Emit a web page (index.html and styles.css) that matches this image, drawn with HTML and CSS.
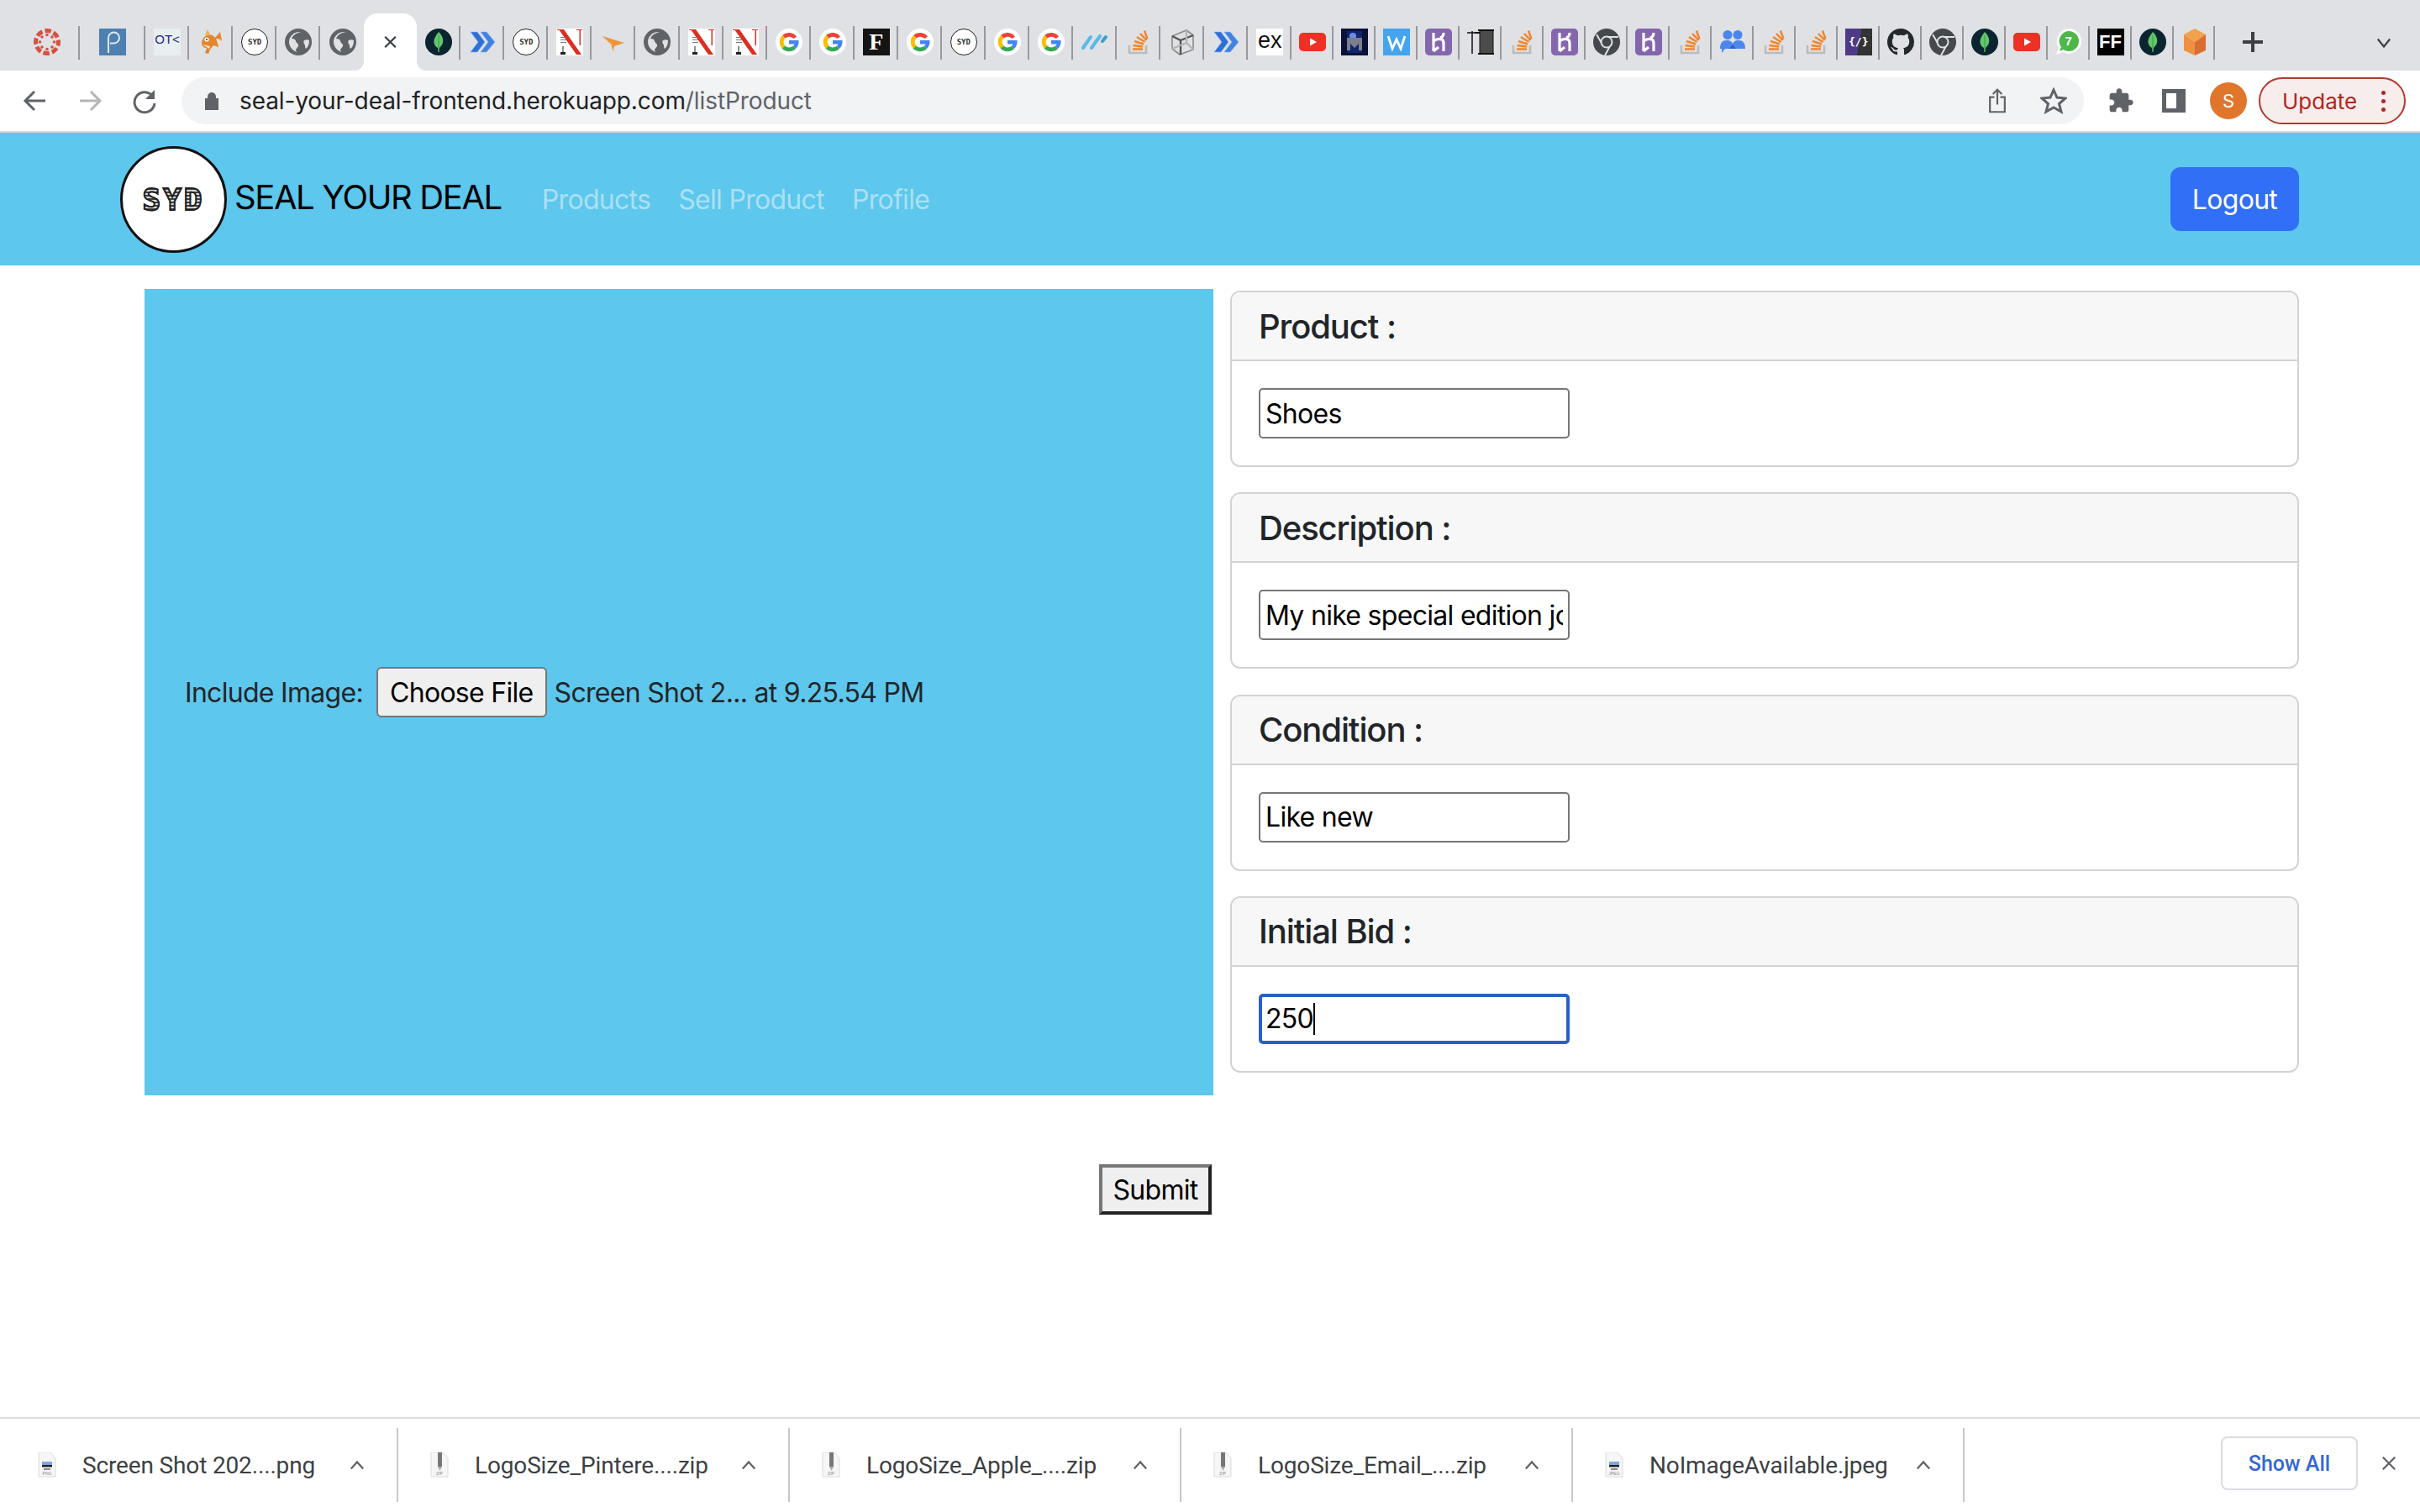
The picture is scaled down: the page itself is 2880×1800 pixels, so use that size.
FILE: index.html
```html
<!DOCTYPE html>
<html lang="en">

<head>
    <meta charset="UTF-8">
    <title>Seal Your Deal</title>
    <link rel="stylesheet" href="styles.css">
</head>

<body>

<!-- favicon sprites -->
<svg class="sprites" xmlns="http://www.w3.org/2000/svg">
    <symbol id="i-canvas" viewBox="0 0 32 32">
        <circle cx="16" cy="16" r="13.5" fill="none" stroke="#d8503f" stroke-width="5" stroke-dasharray="7.5 3.1" stroke-dashoffset="3"/>
        <circle cx="16" cy="7.5" r="1.8" fill="#d8503f"/><circle cx="16" cy="24.5" r="1.8" fill="#d8503f"/>
        <circle cx="7.5" cy="16" r="1.8" fill="#d8503f"/><circle cx="24.5" cy="16" r="1.8" fill="#d8503f"/>
        <circle cx="10" cy="10" r="1.8" fill="#d8503f"/><circle cx="22" cy="10" r="1.8" fill="#d8503f"/>
        <circle cx="10" cy="22" r="1.8" fill="#d8503f"/><circle cx="22" cy="22" r="1.8" fill="#d8503f"/>
    </symbol>
    <symbol id="i-p" viewBox="0 0 32 32">
        <rect width="32" height="32" fill="#4e80b2"/>
        <path d="M11 29V11a6.500 6.500 0 1 1 6.500 6.500H13" fill="none" stroke="#dfe9f2" stroke-width="2"/>
    </symbol>
    <symbol id="i-fish" viewBox="0 0 32 32">
        <path d="M5 17c1-8 7-11 13-9l3 3 6-7 2 10-5 2 1 6-6-2-4 5-2 5-4-1 2-6c-3 0-6-2-6-6z" fill="#e2872f"/>
        <path d="M12 1l3 6-6 1z" fill="#e9b04a"/>
        <path d="M22 12l6 1-3 7z" fill="#f3e3c6"/>
        <circle cx="11" cy="13" r="2.600" fill="#fff"/><circle cx="11" cy="13" r="1" fill="#333"/>
        <path d="M6 19l9 2-1 3z" fill="#f1e6d2"/>
    </symbol>
    <symbol id="i-globe" viewBox="0 0 32 32">
        <circle cx="16" cy="16" r="16" fill="#5f6368"/>
        <path d="M19 4c-4 1-9 3-11 8 3 0 5 1 5 3s4 3 3 6c-1 2-3 3-3 5l1 2c-5-2-9-7-9-12C5 9 11 3 19 4z" fill="#dfe1e5"/>
        <path d="M23 14c2-1 4-1 6 0 0 4-1 8-4 10-1-1-1-3-1-4s-3-3-1-6z" fill="#dfe1e5"/>
    </symbol>
    <symbol id="i-mongo" viewBox="0 0 32 32">
        <circle cx="16" cy="16" r="16" fill="#0a2430"/>
        <path d="M16 4c4 4 6 8 5 13-1 3-3 5-4 6l-.5 5h-1l-.5-5c-2-1-4-3-4.500-6C10 12 13 8 16 4z" fill="#64c66a"/>
        <path d="M16 8v20" stroke="#2f8f45" stroke-width=".8"/>
    </symbol>
    <symbol id="i-chev" viewBox="0 0 32 32">
        <path d="M2 4h8l9 12-9 12H2l9-12z" fill="#2e6fd8" stroke="#8fb4ea" stroke-width=".6"/>
        <path d="M14 4h7l10 12-10 12h-7l9-12z" fill="#3f82e2" stroke="#8fb4ea" stroke-width=".6"/>
    </symbol>
    <symbol id="i-n" viewBox="0 0 32 32">
        <rect width="32" height="32" fill="#fff"/>
        <path d="M3 1h6l21 30h-6z" fill="#dc2e20"/>
        <path d="M24 1h7v1h-2v18h-1.500V2H24zM1 1h4v1H1z" fill="#dc2e20"/>
        <path d="M7.500 21h1v7H11v3H5v-3h2.500z" fill="#222"/>
        <path d="M5 10h6v1H5zM5 13h7v1H5zM5 16h7v1H5z" fill="#777"/>
    </symbol>
    <symbol id="i-arrow" viewBox="0 0 32 32">
        <path d="M3 9l26 8-12 4-1 6-3-8z" fill="#ee933c"/>
        <path d="M3 9l10 10 4 2z" fill="#f7c186"/>
    </symbol>
    <symbol id="i-g" viewBox="0 0 32 32">
        <circle cx="16" cy="16" r="16" fill="#fff"/>
        <path d="M25 9.500A11.500 11.500 0 0 0 8 8l3.500 3.500A7 7 0 0 1 21.500 12z" fill="#ea4335"/>
        <path d="M8 8a11.500 11.500 0 0 0-.3 15.700l3.600-3.300a7 7 0 0 1 .2-8.900z" fill="#fbbc05"/>
        <path d="M7.700 23.700A11.500 11.500 0 0 0 24 24l-3.500-3a7 7 0 0 1-9.200-.6z" fill="#34a853"/>
        <path d="M27.500 14H16v4.500h6.500a6 6 0 0 1-2 2.500l3.500 3c2.500-2.500 4-6 3.500-10z" fill="#4285f4"/>
    </symbol>
    <symbol id="i-wave" viewBox="0 0 32 32">
        <path d="M2 23L11 10M12 23L22 9" fill="none" stroke="#5ab9e8" stroke-width="4" stroke-linecap="round"/>
        <path d="M25 15l4-5" fill="none" stroke="#3f9ec9" stroke-width="4" stroke-linecap="round"/>
    </symbol>
    <symbol id="i-so" viewBox="0 0 32 32">
        <path d="M5 20v9h20v-9" fill="none" stroke="#bcbbbb" stroke-width="2.500"/>
        <path d="M9 24.500h12M9.500 20l11.700 1.500M11 15l11 3.500M14 10l9.500 6M18 6l7.500 8M23 2.500l3.500 10" fill="none" stroke="#f0852d" stroke-width="2.500"/>
    </symbol>
    <symbol id="i-cube" viewBox="0 0 32 32">
        <path d="M4 9l17-7 8 6v17l-16 6-9-7z" fill="none" stroke="#8b8b8b" stroke-width="1.600"/>
        <path d="M4 9l10 5v17M14 14l15-6" fill="none" stroke="#555" stroke-width="2.400"/>
        <path d="M21 2v15L4 24M21 17l8 8" fill="none" stroke="#b4b4b4" stroke-width="2.400"/>
    </symbol>
    <symbol id="i-yt" viewBox="0 0 32 32">
        <rect y="5" width="32" height="22" rx="5" fill="#ee3124"/>
        <path d="M13 11.500l8 4.500-8 4.500z" fill="#fff"/>
    </symbol>
    <symbol id="i-dark" viewBox="0 0 32 32">
        <rect width="32" height="32" fill="#0a1238"/>
        <rect x="7" y="3" width="18" height="26" fill="#12246e"/>
        <circle cx="14" cy="9" r="4" fill="#6c8ee8"/>
        <path d="M7 11h18v15h-4v-8l-5 5-5-5v8H7z" fill="#7b7f8c"/>
    </symbol>
    <symbol id="i-w" viewBox="0 0 32 32">
        <rect width="32" height="32" fill="#45a4ec"/>
        <path d="M6 9l5 15 5-11 5 11 5-15" fill="none" stroke="#fff" stroke-width="2.800"/>
    </symbol>
    <symbol id="i-heroku" viewBox="0 0 32 32">
        <rect width="32" height="32" rx="5" fill="#8466ad"/>
        <path d="M10 5v22M10 27l6-5M10 15c4-3 7-3 10-2 2 1 2 3 2 5v9M22 5c0 3-1 5-4 6" fill="none" stroke="#fff" stroke-width="3.200"/>
    </symbol>
    <symbol id="i-pole" viewBox="0 0 32 32">
        <path d="M6 3v27M0 5h10" stroke="#111" stroke-width="1.500"/>
        <rect x="15" y="2" width="16" height="28" fill="#4c4c4c" stroke="#111"/>
        <path d="M13 2h19M13 30h19M9 5h6" stroke="#111" stroke-width="2"/>
    </symbol>
    <symbol id="i-chrome" viewBox="0 0 32 32">
        <circle cx="16" cy="16" r="16" fill="#45484c"/>
        <path d="M16 10h14M11 19L4 7M21 19l-7 13" stroke="#dfe1e5" stroke-width="2"/>
        <circle cx="16" cy="16" r="6.500" fill="#45484c" stroke="#dfe1e5" stroke-width="2"/>
    </symbol>
    <symbol id="i-people" viewBox="0 0 32 32">
        <circle cx="10" cy="7.500" r="5.500" fill="#4a86ed"/><circle cx="22" cy="7.500" r="5.500" fill="#4a86ed"/>
        <path d="M1 24c0-7 3-10 8-10 4 0 7 2 7 5 0-3 3-5 7-5 5 0 8 3 8 10H7l-4 5v-5z" fill="#4a86ed"/>
        <path d="M16 19l4 5h-8z" fill="#2d62bd"/>
    </symbol>
    <symbol id="i-github" viewBox="0 0 16 16">
        <path fill="#24292e" d="M8 0C3.580 0 0 3.580 0 8c0 3.540 2.290 6.530 5.470 7.590.4.070.55-.17.55-.38 0-.19-.01-.82-.01-1.490-2.010.37-2.530-.49-2.690-.94-.09-.23-.48-.94-.82-1.130-.28-.15-.68-.52-.01-.53.63-.01 1.080.58 1.230.82.72 1.210 1.870.87 2.330.66.07-.52.28-.87.51-1.070-1.780-.2-3.640-.89-3.640-3.950 0-.87.31-1.590.82-2.150-.08-.2-.36-1.020.08-2.120 0 0 .67-.21 2.200.82.64-.18 1.320-.27 2-.27.68 0 1.360.09 2 .27 1.530-1.040 2.200-.82 2.200-.82.44 1.100.16 1.920.08 2.120.51.56.82 1.270.82 2.150 0 3.070-1.870 3.750-3.650 3.950.29.25.54.73.54 1.480 0 1.070-.01 1.930-.01 2.200 0 .21.15.46.55.38A8.013 8.013 0 0 0 16 8c0-4.420-3.580-8-8-8z"/>
    </symbol>
    <symbol id="i-wa" viewBox="0 0 32 32">
        <path d="M16 0a15 15 0 0 1 15 15 15 15 0 0 1-22 13l-8 3 3-8A15 15 0 0 1 16 0z" fill="#fff"/>
        <path d="M16 3a12 12 0 0 1 0 24c-2.500 0-4.500-.7-6.500-2L5 27l2-5A12 12 0 0 1 16 3z" fill="#4cb848"/>
    </symbol>
    <symbol id="i-box" viewBox="0 0 32 32">
        <path d="M16 0l13 7-13 9L3 7z" fill="#f0a24c"/>
        <path d="M3 7l13 9v16L3 26z" fill="#ee9140"/>
        <path d="M29 7L16 16v16l13-6z" fill="#d96e34"/>
    </symbol>
    <symbol id="i-file" viewBox="0 0 22 30">
        <path d="M1 0h14l6 7v22H1z" fill="#f6f6f6" stroke="#dcdcdc"/>
        <rect x="5" y="11" width="12" height="6" fill="#7fa6dc"/>
        <rect x="5" y="15" width="12" height="2.500" fill="#222"/>
        <rect x="7" y="19" width="8" height="2" fill="#889"/>
    </symbol>
    <symbol id="i-zip" viewBox="0 0 22 30">
        <path d="M1 0h14l6 7v22H1z" fill="#f6f6f6" stroke="#dcdcdc"/>
        <rect x="9" y="0" width="5" height="17" fill="#777"/>
        <path d="M9 17h5l-2.500 5z" fill="#aaa"/>
    </symbol>
</svg>

<!-- browser chrome -->
<div class="tabstrip">
    <div class="tab tab-wide"><svg class="fav"><use href="#i-canvas"/></svg></div>
    <div class="tab tab-wide"><svg class="fav"><use href="#i-p"/></svg></div>
    <div class="tab"><div class="fav fav-otc">OT&lt;</div></div>
    <div class="tab"><svg class="fav"><use href="#i-fish"/></svg></div>
    <div class="tab"><div class="fav fav-syd">SYD</div></div>
    <div class="tab"><svg class="fav"><use href="#i-globe"/></svg></div>
    <div class="tab tab-last"><svg class="fav"><use href="#i-globe"/></svg></div>
    <div class="tab-active">
        <svg class="tab-close" viewBox="0 0 20 20"><path d="M3 3l14 14M17 3L3 17"/></svg>
    </div>
    <div class="tab"><svg class="fav"><use href="#i-mongo"/></svg></div>
    <div class="tab"><svg class="fav"><use href="#i-chev"/></svg></div>
    <div class="tab"><div class="fav fav-syd">SYD</div></div>
    <div class="tab"><svg class="fav"><use href="#i-n"/></svg></div>
    <div class="tab"><svg class="fav"><use href="#i-arrow"/></svg></div>
    <div class="tab"><svg class="fav"><use href="#i-globe"/></svg></div>
    <div class="tab"><svg class="fav"><use href="#i-n"/></svg></div>
    <div class="tab"><svg class="fav"><use href="#i-n"/></svg></div>
    <div class="tab"><svg class="fav"><use href="#i-g"/></svg></div>
    <div class="tab"><svg class="fav"><use href="#i-g"/></svg></div>
    <div class="tab"><div class="fav fav-f">F</div></div>
    <div class="tab"><svg class="fav"><use href="#i-g"/></svg></div>
    <div class="tab"><div class="fav fav-syd">SYD</div></div>
    <div class="tab"><svg class="fav"><use href="#i-g"/></svg></div>
    <div class="tab"><svg class="fav"><use href="#i-g"/></svg></div>
    <div class="tab"><svg class="fav"><use href="#i-wave"/></svg></div>
    <div class="tab"><svg class="fav"><use href="#i-so"/></svg></div>
    <div class="tab"><svg class="fav"><use href="#i-cube"/></svg></div>
    <div class="tab"><svg class="fav"><use href="#i-chev"/></svg></div>
    <div class="tab"><div class="fav fav-ex">ex</div></div>
    <div class="tab tab-small"><svg class="fav"><use href="#i-yt"/></svg></div>
    <div class="tab tab-small"><svg class="fav"><use href="#i-dark"/></svg></div>
    <div class="tab tab-small"><svg class="fav"><use href="#i-w"/></svg></div>
    <div class="tab tab-small"><svg class="fav"><use href="#i-heroku"/></svg></div>
    <div class="tab tab-small"><svg class="fav"><use href="#i-pole"/></svg></div>
    <div class="tab tab-small"><svg class="fav"><use href="#i-so"/></svg></div>
    <div class="tab tab-small"><svg class="fav"><use href="#i-heroku"/></svg></div>
    <div class="tab tab-small"><svg class="fav"><use href="#i-chrome"/></svg></div>
    <div class="tab tab-small"><svg class="fav"><use href="#i-heroku"/></svg></div>
    <div class="tab tab-small"><svg class="fav"><use href="#i-so"/></svg></div>
    <div class="tab tab-small"><svg class="fav"><use href="#i-people"/></svg></div>
    <div class="tab tab-small"><svg class="fav"><use href="#i-so"/></svg></div>
    <div class="tab tab-small"><svg class="fav"><use href="#i-so"/></svg></div>
    <div class="tab tab-small"><div class="fav fav-code">{/}</div></div>
    <div class="tab tab-small"><svg class="fav"><use href="#i-github"/></svg></div>
    <div class="tab tab-small"><svg class="fav"><use href="#i-chrome"/></svg></div>
    <div class="tab tab-small"><svg class="fav"><use href="#i-mongo"/></svg></div>
    <div class="tab tab-small"><svg class="fav"><use href="#i-yt"/></svg></div>
    <div class="tab tab-small">
        <div class="fav fav-wa"><svg class="fav"><use href="#i-wa"/></svg><span>7</span></div>
    </div>
    <div class="tab tab-small"><div class="fav fav-ff">FF</div></div>
    <div class="tab tab-small"><svg class="fav"><use href="#i-mongo"/></svg></div>
    <div class="tab tab-small"><svg class="fav"><use href="#i-box"/></svg></div>
    <svg class="new-tab" viewBox="0 0 24 24"><path d="M12 0v24M0 12h24"/></svg>
    <svg class="tab-search" viewBox="0 0 20 14"><path d="M2 2l8 10 8-10"/></svg>
</div>

<div class="toolbar">
    <svg class="tool-btn" viewBox="0 0 32 32"><path d="M28 16H5M15 5L4 16l11 11"/></svg>
    <svg class="tool-btn tool-off" viewBox="0 0 32 32"><path d="M4 16h23M17 5l11 11-11 11"/></svg>
    <svg class="tool-btn" viewBox="0 0 32 32"><path d="M26 11a12 12 0 1 0 2 8"/><path class="tool-solid" d="M28 3v11H17z"/></svg>
    <div class="omnibox">
        <svg class="lock" viewBox="0 0 16 20"><path d="M1 8h14v12H1zM4 8V5a4 4 0 0 1 8 0v3"/></svg>
        <span class="url">seal-your-deal-frontend.herokuapp.com<span class="url-path">/listProduct</span></span>
        <svg class="omni-share" viewBox="0 0 24 34"><path d="M8 12H2v20h20V12h-6M12 22V2M6 8l6-6 6 6"/></svg>
        <svg class="omni-star" viewBox="0 0 32 32"><path d="M16 3l4 9 10 1-7.500 6.500L25 29l-9-5-9 5 2.500-9.500L2 13l10-1z"/></svg>
    </div>
    <svg class="puzzle" viewBox="0 0 24 24"><path d="M20.500 11H19V7c0-1.100-.9-2-2-2h-4V3.500C13 2.120 11.880 1 10.500 1S8 2.120 8 3.500V5H4c-1.100 0-1.990.9-1.990 2v3.800H3.500c1.490 0 2.700 1.210 2.700 2.700s-1.210 2.700-2.700 2.700H2V20c0 1.100.9 2 2 2h3.800v-1.500c0-1.490 1.210-2.700 2.700-2.700 1.490 0 2.700 1.210 2.700 2.700V22H17c1.100 0 2-.9 2-2v-4h1.500c1.380 0 2.500-1.120 2.500-2.500S21.880 11 20.500 11z"/></svg>
    <div class="side-panel"></div>
    <div class="avatar">S</div>
    <div class="update">
        <span>Update</span>
        <span class="update-dots"><i></i><i></i><i></i></span>
    </div>
</div>

<!-- page -->
<nav class="navbar">
    <div class="logo"><span class="logo-text">SYD</span></div>
    <a class="brand">SEAL YOUR DEAL</a>
    <a class="nav-link">Products</a>
    <a class="nav-link">Sell Product</a>
    <a class="nav-link">Profile</a>
    <button class="logout">Logout</button>
</nav>

<main class="page">
    <div class="form-row">
        <div class="image-panel">
            <label class="image-label">Include Image:</label>
            <span class="file-btn">Choose File</span>
            <span class="file-name">Screen Shot 2... at 9.25.54 PM</span>
        </div>
        <div class="cards">
            <div class="card">
                <div class="card-header">Product :</div>
                <div class="card-body"><input class="field" type="text" value="Shoes"></div>
            </div>
            <div class="card">
                <div class="card-header">Description :</div>
                <div class="card-body"><input class="field" type="text" value="My nike special edition jordans"></div>
            </div>
            <div class="card">
                <div class="card-header">Condition :</div>
                <div class="card-body"><input class="field" type="text" value="Like new"></div>
            </div>
            <div class="card">
                <div class="card-header">Initial Bid :</div>
                <div class="card-body">
                    <div class="field-wrap">
                        <input class="field field-focus" type="text" value="250">
                        <span class="caret"></span>
                    </div>
                </div>
            </div>
        </div>
    </div>
    <div class="submit-row">
        <button class="submit">Submit</button>
    </div>
</main>

<!-- downloads shelf -->
<footer class="shelf">
    <div class="dl dl-first">
        <div class="dl-icon"><svg class="dl-svg"><use href="#i-file"/></svg><span>PNG</span></div>
        <span class="dl-name">Screen Shot 202....png</span>
        <svg class="dl-chev" viewBox="0 0 20 12"><path d="M2 11l8-9 8 9"/></svg>
    </div>
    <div class="dl">
        <div class="dl-icon"><svg class="dl-svg"><use href="#i-zip"/></svg><span>ZIP</span></div>
        <span class="dl-name">LogoSize_Pintere....zip</span>
        <svg class="dl-chev" viewBox="0 0 20 12"><path d="M2 11l8-9 8 9"/></svg>
    </div>
    <div class="dl">
        <div class="dl-icon"><svg class="dl-svg"><use href="#i-zip"/></svg><span>ZIP</span></div>
        <span class="dl-name">LogoSize_Apple_....zip</span>
        <svg class="dl-chev" viewBox="0 0 20 12"><path d="M2 11l8-9 8 9"/></svg>
    </div>
    <div class="dl">
        <div class="dl-icon"><svg class="dl-svg"><use href="#i-zip"/></svg><span>ZIP</span></div>
        <span class="dl-name">LogoSize_Email_....zip</span>
        <svg class="dl-chev" viewBox="0 0 20 12"><path d="M2 11l8-9 8 9"/></svg>
    </div>
    <div class="dl">
        <div class="dl-icon"><svg class="dl-svg"><use href="#i-file"/></svg><span>JPEG</span></div>
        <span class="dl-name">NoImageAvailable.jpeg</span>
        <svg class="dl-chev" viewBox="0 0 20 12"><path d="M2 11l8-9 8 9"/></svg>
    </div>
    <button class="show-all">Show All</button>
    <svg class="shelf-close" viewBox="0 0 20 20"><path d="M2 2l16 16M18 2L2 18"/></svg>
</footer>

</body>

</html>
```

FILE: styles.css
```css
* {
    box-sizing: border-box;
}

body {
    margin: 0;
    width: 2880px;
    height: 1800px;
    overflow: hidden;
    display: flex;
    flex-direction: column;
    background-color: #fff;
    color: #212529;
    font-family: Inter, "Liberation Sans", sans-serif;
    font-size: 32px;
    letter-spacing: -0.7px;
}

.sprites {
    width: 0;
    height: 0;
    position: absolute;
}

/* tab strip */
.tabstrip {
    height: 84px;
    flex: none;
    display: flex;
    align-items: flex-start;
    padding: 16px 0 0 17px;
    background-color: #dfe1e5;
}

.tab {
    width: 52.05px;
    height: 40px;
    margin-top: 15px;
    flex: none;
    display: flex;
    justify-content: center;
    padding-top: 3px;
    padding-left: 2px;
    border-right: 2px solid #98999c;
}

.tab-wide {
    width: 78px;
}

.tab-small {
    width: 49.98px;
}

.tab-last {
    border-right: none;
}

.fav {
    width: 32px;
    height: 32px;
    flex: none;
    display: block;
    letter-spacing: 0;
    overflow: hidden;
    text-align: center;
}

.fav-otc {
    padding-top: 4px;
    background-color: #e9eef0;
    color: #1f2a8c;
    font: 15px/18px "Liberation Sans", sans-serif;
}

.fav-syd {
    border: 1px solid #222;
    border-radius: 50%;
    background-color: #fff;
    color: #333;
    font: bold 9px/30px "DejaVu Sans Mono", monospace;
}

.fav-f {
    background-color: #141414;
    color: #fff;
    font: bold 28px/32px "Liberation Serif", serif;
}

.fav-ex {
    background-color: #fff;
    color: #111;
    font: 27px/28px "Liberation Sans", sans-serif;
}

.fav-ff {
    background-color: #000;
    color: #fff;
    font: bold 22px/32px "Liberation Sans", sans-serif;
}

.fav-code {
    background: linear-gradient(100deg, #4f3b85 52%, #333 52%);
    color: #fff;
    font: bold 13px/32px "DejaVu Sans Mono", monospace;
}

.fav-wa {
    position: relative;
    color: #fff;
    font: bold 15px/30px "Liberation Sans", sans-serif;
}

.fav-wa span {
    position: absolute;
    left: 0;
    top: 0;
    width: 32px;
}

.tab-active {
    position: relative;
    width: 63px;
    height: 68px;
    flex: none;
    display: flex;
    justify-content: center;
    align-items: center;
    background-color: #fff;
    border-radius: 16px 16px 0 0;
}

.tab-active::before,
.tab-active::after {
    content: "";
    position: absolute;
    bottom: 0;
    width: 12px;
    height: 12px;
}

.tab-active::before {
    left: -12px;
    background: radial-gradient(circle at 0 0, transparent 12px, #fff 12.5px);
}

.tab-active::after {
    right: -12px;
    background: radial-gradient(circle at 100% 0, transparent 12px, #fff 12.5px);
}

.tab-close {
    width: 19px;
    height: 18px;
    fill: none;
    stroke: #3c4043;
    stroke-width: 2.5;
}

.new-tab {
    width: 24px;
    height: 24px;
    margin: 22px 0 0 33px;
    flex: none;
    fill: none;
    stroke: #3c4043;
    stroke-width: 4;
}

.tab-search {
    width: 18px;
    height: 14px;
    margin: 28px 0 0 135px;
    flex: none;
    fill: none;
    stroke: #3c4043;
    stroke-width: 2.5;
}

/* toolbar */
.toolbar {
    height: 74px;
    flex: none;
    display: flex;
    align-items: flex-start;
    padding: 8px 0 0 26px;
    background-color: #fff;
    border-bottom: 2px solid #d8d8d8;
    letter-spacing: 0;
}

.tool-btn {
    width: 32px;
    height: 32px;
    margin: 12px 33px 0 0;
    flex: none;
    fill: none;
    stroke: #5f6368;
    stroke-width: 3;
}

.tool-off {
    stroke: #b4b6b9;
}

.tool-solid {
    fill: #5f6368;
    stroke: none;
}

.omnibox {
    width: 2264px;
    height: 56px;
    margin-left: -5px;
    flex: none;
    display: flex;
    align-items: center;
    padding-left: 28px;
    background-color: #f1f3f4;
    border-radius: 28px;
}

.lock {
    width: 16px;
    height: 22px;
    flex: none;
}

.lock path {
    fill: #5f6368;
    stroke: #5f6368;
    stroke-width: 2;
}

.url {
    margin-left: 25px;
    font-size: 28px;
    letter-spacing: -0.1px;
    color: #202124;
    white-space: nowrap;
}

.url-path {
    color: #5f6368;
}

.omni-share {
    width: 24px;
    height: 30px;
    margin-left: auto;
    flex: none;
    fill: none;
    stroke: #5f6368;
    stroke-width: 2.5;
}

.omni-star {
    width: 32px;
    height: 32px;
    margin: 0 20px 0 39px;
    flex: none;
    fill: none;
    stroke: #5f6368;
    stroke-width: 3;
}

.puzzle {
    width: 32px;
    height: 32px;
    margin: 12px 0 0 28px;
    flex: none;
    fill: #5f6368;
}

.side-panel {
    width: 28px;
    height: 28px;
    margin: 14px 0 0 33px;
    flex: none;
    border: 5px solid #5f6368;
    border-right-width: 11px;
    background-color: #fff;
}

.avatar {
    width: 44px;
    height: 44px;
    margin: 6px 0 0 29px;
    flex: none;
    display: flex;
    justify-content: center;
    align-items: center;
    border-radius: 50%;
    background-color: #e0752c;
    color: #fff;
    font-size: 22px;
}

.update {
    width: 175px;
    height: 56px;
    margin-left: 14px;
    flex: none;
    display: flex;
    align-items: center;
    justify-content: space-between;
    padding: 0 22px 0 26px;
    border: 2px solid #b3392f;
    border-radius: 28px;
    background-color: #f8eded;
    color: #b3261e;
    font-size: 26px;
}

.update-dots {
    display: flex;
    flex-direction: column;
    gap: 5px;
}

.update-dots i {
    width: 5px;
    height: 5px;
    border-radius: 50%;
    background-color: #b3261e;
}

/* navbar */
.navbar {
    height: 158px;
    flex: none;
    display: flex;
    align-items: center;
    padding: 0 144px 0 143px;
    background-color: #5dc7ed;
}

.logo {
    width: 127px;
    height: 127px;
    flex: none;
    display: flex;
    justify-content: center;
    align-items: center;
    border-radius: 50%;
    border: 3px solid #111;
    background-color: #fff;
}

.logo-text {
    font: bold 36px "DejaVu Sans Mono", monospace;
    letter-spacing: 3px;
    color: transparent;
    background: repeating-linear-gradient(0deg, #444 0 2px, #ddd 2px 4px);
    -webkit-background-clip: text;
    background-clip: text;
    -webkit-text-stroke: 2px #222;
}

.brand {
    margin: -6px 48px 0 9px;
    font-size: 40px;
    letter-spacing: -1.4px;
    color: #000;
    white-space: nowrap;
}

.nav-link {
    margin-right: 33px;
    color: #ace0f4;
}

.logout {
    width: 153px;
    height: 76px;
    margin-left: auto;
    border: none;
    border-radius: 12px;
    background-color: #316ff6;
    color: #fff;
    font: inherit;
    letter-spacing: -0.7px;
}

/* form */
.page {
    flex: 1;
}

.form-row {
    display: flex;
    gap: 20px;
    padding: 28px 0 0 172px;
}

.image-panel {
    width: 1272px;
    height: 960px;
    flex: none;
    display: flex;
    align-items: center;
    padding-left: 48px;
    background-color: #5dc7ed;
}

.file-btn {
    height: 60px;
    margin: 0 9px 0 16px;
    display: flex;
    align-items: center;
    padding: 0 14px;
    border: 2px solid #767676;
    border-radius: 6px;
    background-color: #efefef;
    color: #000;
}

.cards {
    width: 1272px;
    flex: none;
    display: flex;
    flex-direction: column;
    gap: 30.33px;
    padding-top: 2px;
}

.card {
    height: 210px;
    border: 2px solid #d3d3d3;
    border-radius: 12px;
    overflow: hidden;
}

.card-header {
    height: 82px;
    display: flex;
    align-items: center;
    padding-left: 32px;
    background-color: #f7f7f7;
    border-bottom: 2px solid #d3d3d3;
    font-size: 40px;
    font-weight: 500;
    letter-spacing: -1.1px;
}

.card-body {
    padding: 32px 0 0 32px;
}

.field-wrap {
    position: relative;
    width: 370px;
}

.field {
    display: block;
    width: 370px;
    height: 60px;
    padding: 2px 6px;
    border: 2px solid #767676;
    border-radius: 5px;
    background-color: #fff;
    color: #000;
    font: inherit;
    letter-spacing: -0.7px;
}

.field-focus {
    border: 4px solid #2a5fc7;
    padding: 2px 4px;
    outline: none;
}

.caret {
    position: absolute;
    left: 65px;
    top: 11px;
    width: 2px;
    height: 38px;
    background-color: #000;
}

.submit-row {
    width: 1442px;
    margin-top: 82px;
    display: flex;
    justify-content: flex-end;
}

.submit {
    width: 134px;
    height: 60px;
    padding: 0;
    border: 4px solid;
    border-color: #767676 #222 #222 #767676;
    background-color: #efefef;
    color: #000;
    font: inherit;
    letter-spacing: -0.7px;
}

/* downloads */
.shelf {
    height: 113px;
    flex: none;
    display: flex;
    align-items: flex-start;
    padding-top: 11px;
    border-top: 2px solid #dcdcdc;
    background-color: #fff;
    letter-spacing: 0;
}

.dl {
    width: 466px;
    height: 88px;
    flex: none;
    display: flex;
    align-items: center;
    padding: 0 38px 0 38px;
    border-right: 2px solid #c8c8c8;
}

.dl-first {
    width: 474px;
    padding-left: 45px;
}

.dl-icon {
    position: relative;
    width: 22px;
    height: 30px;
    flex: none;
    text-align: center;
    color: #888;
    font: 5px/7px "Liberation Sans", sans-serif;
}

.dl-svg {
    display: block;
    width: 22px;
    height: 30px;
}

.dl-icon span {
    position: absolute;
    left: 0;
    bottom: 1px;
    width: 22px;
}

.dl-name {
    margin-left: 31px;
    font: 28px Roboto, sans-serif;
    letter-spacing: -0.15px;
    color: #3c4043;
    white-space: nowrap;
}

.dl-chev {
    width: 18px;
    height: 12px;
    margin-left: auto;
    flex: none;
    fill: none;
    stroke: #5f6368;
    stroke-width: 2.5;
}

.show-all {
    width: 163px;
    height: 64px;
    margin: 10px 0 0 auto;
    flex: none;
    border: 2px solid #dadce0;
    border-radius: 8px;
    background-color: #fff;
    color: #3367d6;
    font: 500 25px Roboto, sans-serif;
}

.shelf-close {
    width: 20px;
    height: 18px;
    margin: 33px 27px 0 27px;
    flex: none;
    fill: none;
    stroke: #5f6368;
    stroke-width: 2.5;
}
```
